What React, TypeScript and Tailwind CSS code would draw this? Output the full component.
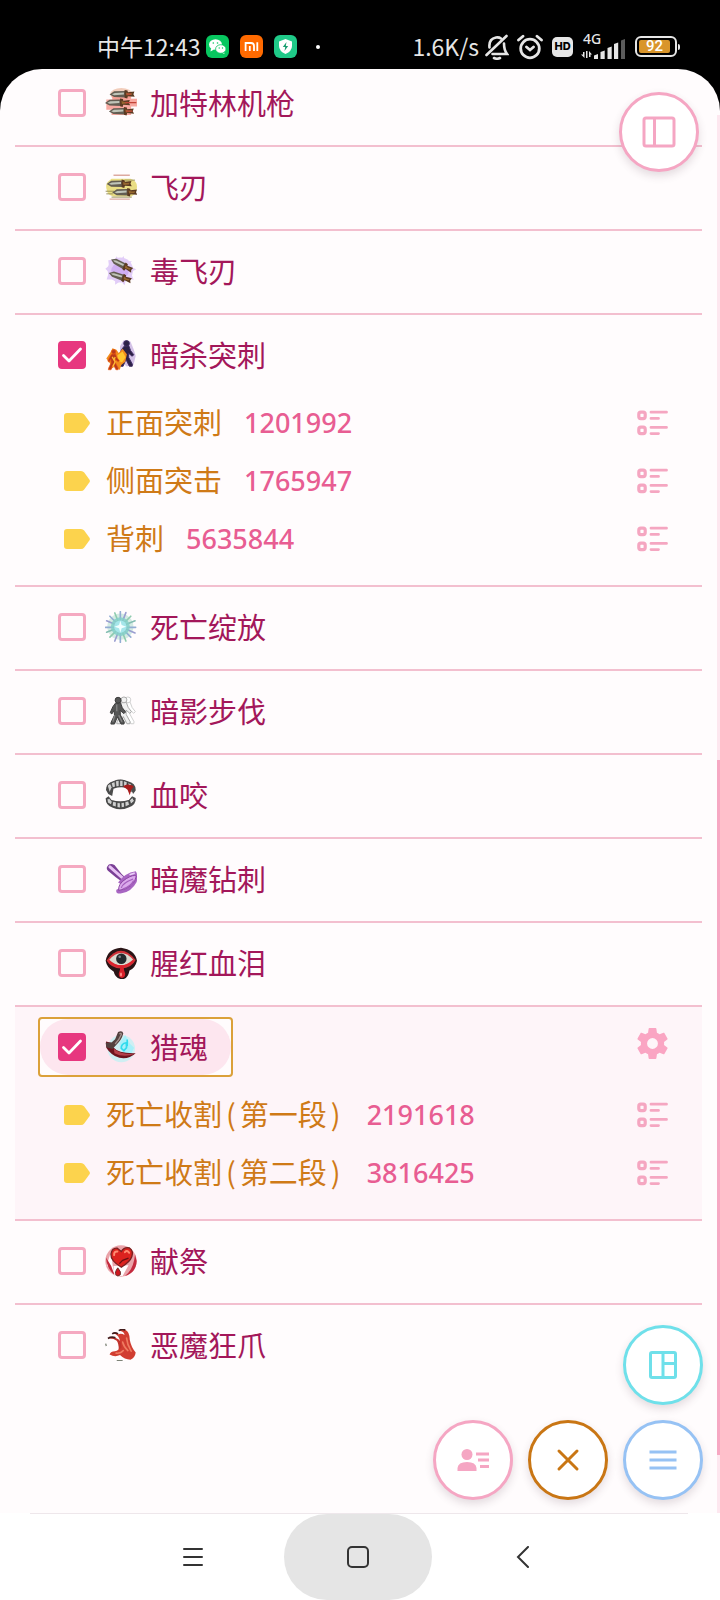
import { useState } from 'react';
import type { ReactNode } from 'react';

interface Hit {
  name: string;
  value: string;
}

interface Skill {
  id: string;
  name: string;
  checked?: boolean;
  hits?: Hit[];
}

const skills: Skill[] = [
  { id: 'gatling', name: '加特林机枪' },
  { id: 'blade', name: '飞刃' },
  { id: 'poison', name: '毒飞刃' },
  {
    id: 'assassin',
    name: '暗杀突刺',
    checked: true,
    hits: [
      { name: '正面突刺', value: '1201992' },
      { name: '侧面突击', value: '1765947' },
      { name: '背刺', value: '5635844' },
    ],
  },
  { id: 'bloom', name: '死亡绽放' },
  { id: 'step', name: '暗影步伐' },
  { id: 'bite', name: '血咬' },
  { id: 'drill', name: '暗魔钻刺' },
  { id: 'tears', name: '腥红血泪' },
  {
    id: 'soul',
    name: '猎魂',
    checked: true,
    hits: [
      { name: '死亡收割(第一段)', value: '2191618' },
      { name: '死亡收割(第二段)', value: '3816425' },
    ],
  },
  { id: 'sacrifice', name: '献祭' },
  { id: 'claw', name: '恶魔狂爪' },
];

// Blade points left, tip at 0,0
function Dagger({ at }: { at: string }) {
  return (
    <g transform={at}>
      <path d="M0 1 L14 -9 L48 -10 V10 L14 9 Z" fill="#635d52" />
      <path d="M7 0 L16 -4 L44 -5 V1 L14 3 Z" fill="#bfc4b8" />
      <path d="M46 -13 L55 -11 L56 -6 L76 -8 L73 0 L77 8 L56 6 L54 13 L46 11 Z" fill="#5b3a22" />
      <path d="M50 -5 L60 -2 L70 -3 L68 2 L52 4 Z" fill="#96672f" />
    </g>
  );
}

function Walker({ at, fill, stroke }: { at: string; fill: string; stroke: string }) {
  return (
    <g transform={at} fill={fill} stroke={stroke} strokeWidth="3" strokeLinejoin="round">
      <path d="M17 20 L32 18 L38 34 L48 47 L43 52 L31 42 L32 56 L44 78 L43 84 L34 84 L23 62 L14 84 L3 84 L4 78 L14 57 L13 42 L6 53 L1 49 L9 31 Z" />
      <circle cx="25" cy="11" r="9" />
    </g>
  );
}

const skillArt: Record<string, ReactNode> = {
  gatling: (
    <>
      <ellipse cx="50" cy="22" rx="34" ry="19" fill="#f2cdbb" />
      <path d="M22 18 H80 V36 H98 V60 H80 V86 H20 V70 H4 V38 H22 Z" fill="#f59389" opacity=".8" />
      <Dagger at="translate(14 22)" />
      <Dagger at="translate(0 48)" />
      <Dagger at="translate(12 74)" />
      <path d="M62 48 H96 M66 22 H80 M64 74 H84" stroke="#c24438" strokeWidth="4" />
    </>
  ),
  blade: (
    <>
      <path d="M20 24 H78 Q98 30 98 48 Q98 70 80 78 H26 Q8 74 6 60 Q0 44 8 34 Z" fill="#e9dd84" />
      <path d="M26 13 H76 M14 86 H76" stroke="#dda9a0" strokeWidth="4" />
      <path d="M2 62 H28 M4 70 H24 M60 28 H92 M20 80 H82" stroke="#9b925a" strokeWidth="3" />
      <Dagger at="translate(5 39)" />
      <Dagger at="translate(22 65)" />
    </>
  ),
  poison: (
    <>
      <g fill="#e2cdf8">
        <ellipse cx="47" cy="46" rx="39" ry="38" />
        <path d="M36 4 L43 18 L58 3 V22 L82 18 L72 34 L96 44 L78 53 L88 76 L65 72 L60 93 L48 80 L31 91 L31 75 L5 75 L12 53 L1 42 L12 33 L10 16 L30 14 Z" />
      </g>
      <ellipse cx="46" cy="48" rx="27" ry="24" fill="#cfaef2" />
      <Dagger at="translate(19 13) rotate(28) scale(.95)" />
      <Dagger at="translate(12 54) rotate(20) scale(.95)" />
    </>
  ),
  assassin: (
    <>
      <path d="M46 22 L57 4 L78 8 L88 32 L94 52 L87 80 L66 84 L46 62 Z" fill="#b79bd8" opacity=".6" />
      <Walker at="translate(42 3) scale(.96)" fill="#2c2145" stroke="#3e2b63" />
      <path d="M4 60 L16 42 L23 28 L35 33 L42 43 L54 30 L67 47 L62 70 L50 80 L45 95 L34 82 L18 92 L16 76 Z" fill="#f28c1c" />
      <path d="M38 50 L54 38 L63 56 L52 72 L40 66 Z" fill="#ffc72e" />
      <Walker at="translate(8 31) scale(.75)" fill="#b8391a" stroke="#e95b14" />
      <path d="M22 55 L31 70 L24 85 M31 55 L28 64" stroke="#ffbd35" strokeWidth="4" fill="none" />
    </>
  ),
  bloom: (
    <>
      <circle cx="47" cy="48" r="40" fill="#d3ebe3" />
      <g strokeWidth="5" strokeLinecap="round">
        <path d="M47 2 V96 M2 50 H94 M15 16 L79 80" stroke="#93add3" />
        <path d="M15 80 L79 16 M30 6 L64 92" stroke="#8ecbae" />
        <path d="M64 5 L30 92 M5 30 L92 67" stroke="#9a9dd0" />
        <path d="M5 65 L92 30" stroke="#84bdb2" />
      </g>
      <circle cx="47" cy="48" r="29" fill="#84cfc8" opacity=".85" />
      <circle cx="47" cy="48" r="19" fill="#a5e6ea" />
      <path d="M47 30 L51 43 L65 48 L51 53 L47 66 L43 53 L29 48 L43 43 Z" fill="#f2ffff" />
    </>
  ),
  step: (
    <>
      <Walker at="translate(45 4)" fill="#fff" stroke="#cfcfcf" />
      <Walker at="translate(33 4)" fill="#f1f1f1" stroke="#a9a9a9" />
      <Walker at="translate(15 5)" fill="#565656" stroke="#3b3b3b" />
      <path d="M30 62 L24 82 M42 62 L52 82 M36 29 V50" stroke="#858585" strokeWidth="4" />
    </>
  ),
  bite: (
    <>
      <path d="M3 34 Q3 12 27 6 Q48 -3 70 7 Q95 13 94 35 L86 46 Q82 31 70 28 Q46 22 26 30 L22 52 L10 46 Z" fill="#4c4c4c" />
      <path d="M2 59 L11 53 L20 64 Q46 72 73 64 L83 53 L94 58 Q96 80 72 87 Q48 98 24 88 Q2 82 2 59 Z" fill="#4c4c4c" />
      <g fill="#cfcfcf" stroke="#333" strokeWidth="2">
        <path d="M7 20 L16 14 L22 25 L14 42 Z" />
        <path d="M19 12 L30 8 L32 24 L23 27 Z" />
        <path d="M32 6 L43 4 V23 L34 24 Z" />
        <path d="M45 4 H55 V23 H45 Z" />
        <path d="M57 5 L68 9 L66 25 L57 24 Z" />
        <path d="M70 11 L81 16 L80 40 L73 29 Z" />
        <path d="M6 61 L14 60 L22 70 L19 79 L8 73 Z" />
        <path d="M24 68 L35 71 L34 86 L22 82 Z" />
        <path d="M37 72 L47 73 V89 L37 87 Z" />
        <path d="M49 73 L59 71 L60 86 L50 88 Z" />
        <path d="M61 70 L72 67 L75 80 L62 85 Z" />
        <path d="M75 65 L84 57 L90 67 L79 77 Z" />
      </g>
      <path d="M55 22 Q70 12 88 22 L80 34 L76 50 L69 33 Z" fill="#a91c1c" />
    </>
  ),
  drill: (
    <>
      <path d="M7 11 Q13 -1 29 6 L51 34 L64 46 L51 57 L33 44 L9 24 Q3 17 7 11 Z" fill="#7b3f96" />
      <path d="M15 12 L56 48" stroke="#e8c2f4" strokeWidth="9" strokeLinecap="round" />
      <path d="M40 60 Q60 30 94 25 Q102 35 97 58 Q82 87 51 93 Q31 96 35 82 Q50 76 49 65 Z" fill="#a865c2" />
      <path d="M42 84 Q39 64 65 48 Q88 34 96 40 Q90 77 42 84 Z" fill="#dba9ec" stroke="#8a45a2" strokeWidth="3" />
      <path d="M50 76 Q54 61 86 49 M54 80 Q79 72 88 54" stroke="#a55fbe" strokeWidth="4" fill="none" />
      <path d="M75 36 L91 31" stroke="#ead0f7" strokeWidth="5" fill="none" />
    </>
  ),
  tears: (
    <>
      <path d="M2 42 Q8 5 49 2 Q92 8 98 42 Q93 64 75 72 Q70 99 51 99 Q30 95 27 76 Q5 62 2 42 Z" fill="#2a1416" />
      <path d="M5 41 Q47 -17 94 40 Q82 64 50 66 Q18 64 5 41 Z" fill="#cf3037" />
      <path d="M13 39 Q48 -2 86 38 Q49 74 13 39 Z" fill="#d9d9cf" />
      <circle cx="50" cy="36" r="16" fill="#23292d" />
      <circle cx="45" cy="30" r="4" fill="#7b858a" />
      <path d="M12 44 Q48 74 87 43" fill="none" stroke="#e0202b" strokeWidth="5" />
      <path d="M47 60 H57 Q57 70 62 82 Q62 94 52 95 Q42 94 42 82 Q47 70 47 60 Z" fill="#d9202a" />
      <ellipse cx="49" cy="84" rx="3" ry="6" fill="#ff8f8b" />
    </>
  ),
  soul: (
    <>
      <circle cx="50" cy="54" r="42" fill="#cfeff3" />
      <path d="M44 37 L62 13 L69 26 L77 40 L89 51 L78 75 L59 70 L46 54 Z" fill="#a8f0fa" />
      <path d="M50 53 Q49 39 65 36 L66 51 L58 60 Z M68 26 V47" stroke="#31dbed" strokeWidth="5" fill="none" />
      <path d="M3 32 L28 38 L25 50 Q42 70 94 68 Q72 88 44 82 Q19 75 4 51 Z" fill="#6e141e" />
      <path d="M27 54 Q50 73 92 70 Q57 83 29 68 Z" fill="#b5404a" />
      <path d="M2 36 L20 35 L31 25 L40 3 Q54 -3 56 8 Q51 28 35 42 L23 55 L4 50 Z" fill="#54413f" />
      <path d="M44 9 Q50 5 50 11 Q45 25 31 40" stroke="#a4908d" strokeWidth="4" fill="none" />
    </>
  ),
  sacrifice: (
    <>
      <circle cx="49" cy="49" r="48" fill="#eaa3a9" />
      <path d="M5 62 L18 22 L35 8 Q12 40 30 88 Z" fill="#fff" />
      <path d="M61 95 Q87 76 92 30 L97 49 Q96 84 61 95 Z M3 38 Q6 73 29 91 L19 64 Z" fill="#c42a3e" />
      <path d="M26 64 L72 62 L54 95 L29 93 Z" fill="#fff" />
      <path d="M50 68 Q17 49 18 28 Q22 8 38 10 L50 20 Q59 5 75 9 Q88 18 82 36 Q77 51 50 68 Z" fill="#dc231f" stroke="#7a2020" strokeWidth="4" />
      <path d="M28 31 Q27 19 38 20 M61 22 Q68 14 74 24" stroke="#ff8c71" strokeWidth="6" fill="none" strokeLinecap="round" />
      <path d="M44 57 L54 47 L72 40" stroke="#681111" strokeWidth="4" fill="none" />
      <path d="M39 70 Q29 84 33 91 Q39 99 47 91 Q51 83 39 70 Z" fill="#cf171f" stroke="#673431" strokeWidth="3" />
    </>
  ),
  claw: (
    <>
      <path d="M40 16 Q30 8 24 14 Q34 14 40 22 Q48 32 44 50 Q46 66 30 68 Q18 68 14 78 Q30 88 46 80 Q60 94 78 94 Q92 88 94 72 Q80 56 76 34 Q76 8 62 2 Q48 -2 44 5 Q58 6 60 18 Q50 12 40 16 Z" fill="#d13d31" />
      <path d="M12 29 Q28 22 42 32 Q52 42 50 58 L42 62 Q42 44 36 36 Q26 28 12 29 Z" fill="#c2332c" />
      <path d="M54 40 Q58 56 70 66 M66 28 Q68 48 80 68 M34 74 Q48 76 56 66" stroke="#ef7b61" strokeWidth="5" fill="none" strokeLinecap="round" />
      <path d="M9 29 Q20 22 32 27 M22 15 Q30 9 40 15 M42 5 Q52 -1 62 3" stroke="#431c1c" strokeWidth="5" fill="none" />
      <path d="M36 97 H54 M2 45 L4 52" stroke="#7d8377" strokeWidth="4" />
    </>
  ),
};

function SkillIcon({ id }: { id: string }) {
  return (
    <svg viewBox="0 0 98 98" className="size-8 shrink-0" aria-hidden="true">
      {skillArt[id]}
    </svg>
  );
}

function ListIcon() {
  return (
    <svg viewBox="0 0 31 26" className="h-[26px] w-[31px]" fill="none" stroke="#f5a6c1" strokeWidth="3.2" aria-hidden="true">
      <rect x="1.8" y="2.2" width="6.4" height="6.4" rx="2" />
      <rect x="1.8" y="17.2" width="6.4" height="6.4" rx="2" />
      <path d="M14 2.2 H29.5 M14 8.4 H21.5 M14 17.4 H29.5 M14 23.6 H21.5" strokeWidth="2.8" strokeLinecap="round" />
    </svg>
  );
}

function HitRow({ hit }: { hit: Hit }) {
  const parts = hit.name.split(/([()])/);
  return (
    <div className="flex h-[58px] items-center pr-[34px] pl-[49px]">
      <svg viewBox="0 0 26 20" className="h-5 w-[26px] shrink-0" fill="#fcd34d" aria-hidden="true">
        <path d="M3 0 H17 Q19 0 20.2 1.6 L25.5 8.7 Q26.3 10 25.5 11.3 L20.2 18.4 Q19 20 17 20 H3 Q0 20 0 17 V3 Q0 0 3 0 Z" />
      </svg>
      <span className="ml-4 pb-1 text-[29px] leading-none text-[#cf7a17]">
        {parts.map((part, i) =>
          part === '(' || part === ')' ? (
            <span key={i} className="px-1">{part}</span>
          ) : (
            part
          ),
        )}
      </span>
      <span className="ml-[22px] pb-0.5 font-['Noto_Sans'] text-[27px] leading-none font-medium text-[#e85d92]">{hit.value}</span>
      <button type="button" aria-label={`${hit.name} 详情`} className="ml-auto">
        <ListIcon />
      </button>
    </div>
  );
}

function SkillRow({ skill, active, last }: { skill: Skill; active: boolean; last: boolean }) {
  const [checked, setChecked] = useState(!!skill.checked);

  return (
    <li className={`pt-2.5 ${last ? '' : 'border-b-2 border-[#f3bfcf]'} ${active ? 'bg-[#fef5f9]' : ''}`}>
      <div className={`flex items-center justify-between pr-[34px] pl-[23px] ${skill.hits ? 'pb-[9px]' : 'pb-3'}`}>
        <div className={`rounded-sm border-2 ${active ? 'border-[#dba13a] bg-[#fffcfd]' : 'border-transparent'}`}>
          <label className={`flex h-14 items-center rounded-full pr-[23px] pl-[18px] ${active ? 'bg-[#fde6ef]' : ''}`}>
            <span className="grid size-7 shrink-0">
              <input
                type="checkbox"
                checked={checked}
                onChange={(e) => setChecked(e.target.checked)}
                className="col-start-1 row-start-1 size-7 appearance-none rounded-sm border-3 border-[#f5a9c1] checked:border-[#e7377f] checked:bg-[#e7377f]"
              />
              {checked && (
                <svg viewBox="0 0 28 28" className="pointer-events-none col-start-1 row-start-1 size-7" fill="none" stroke="#fff" strokeWidth="2.8" strokeLinecap="round" strokeLinejoin="round">
                  <path d="M5.500 14.500 L11 20 L22.500 8" />
                </svg>
              )}
            </span>
            <span className="ml-[19px]">
              <SkillIcon id={skill.id} />
            </span>
            <span className="ml-[13px] pb-0.5 text-[29px] leading-none text-[#a3175a]">{skill.name}</span>
          </label>
        </div>
        {active && (
          <button type="button" aria-label="设置" className="flex h-[52px] items-center self-start">
            <svg viewBox="2 2 20 20" className="size-[31px]" fill="#faa5c3" aria-hidden="true">
              <path d="M12 15.5A3.5 3.5 0 0 1 8.5 12 3.5 3.5 0 0 1 12 8.5 3.5 3.5 0 0 1 15.5 12 3.5 3.5 0 0 1 12 15.5M19.43 12.97C19.47 12.65 19.5 12.33 19.5 12S19.47 11.34 19.43 11L21.54 9.37C21.73 9.22 21.78 8.95 21.66 8.73L19.66 5.27C19.54 5.05 19.27 4.96 19.05 5.05L16.56 6.05C16.04 5.66 15.5 5.32 14.87 5.07L14.5 2.42C14.46 2.18 14.25 2 14 2H10C9.75 2 9.54 2.18 9.5 2.42L9.13 5.07C8.5 5.32 7.96 5.66 7.44 6.05L4.95 5.05C4.73 4.96 4.46 5.05 4.34 5.27L2.34 8.73C2.21 8.95 2.27 9.22 2.46 9.37L4.57 11C4.53 11.34 4.5 11.67 4.5 12S4.53 12.65 4.57 12.97L2.46 14.63C2.27 14.78 2.21 15.05 2.34 15.27L4.34 18.73C4.46 18.95 4.73 19.03 4.95 18.95L7.44 17.94C7.96 18.34 8.5 18.68 9.13 18.93L9.5 21.58C9.54 21.82 9.75 22 10 22H14C14.25 22 14.46 21.82 14.5 21.58L14.87 18.93C15.5 18.67 16.04 18.34 16.56 17.94L19.05 18.95C19.27 19.03 19.54 18.95 19.66 18.73L21.66 15.27C21.78 15.05 21.73 14.78 21.54 14.63L19.43 12.97Z" />
            </svg>
          </button>
        )}
      </div>
      {skill.hits && (
        <div className="pb-[17px]">
          {skill.hits.map((hit) => (
            <HitRow key={hit.name} hit={hit} />
          ))}
        </div>
      )}
    </li>
  );
}

function RoundButton({ label, className, children }: { label: string; className: string; children: ReactNode }) {
  return (
    <button
      type="button"
      aria-label={label}
      className={`flex size-20 items-center justify-center rounded-full border-3 bg-white shadow-[0_4px_8px_rgba(80,50,70,0.16)] ${className}`}
    >
      <svg viewBox="0 0 34 34" className="size-[34px]" fill="none" stroke="currentColor" strokeWidth="3" strokeLinejoin="round" aria-hidden="true">
        {children}
      </svg>
    </button>
  );
}

function StatusBar() {
  return (
    <header className="flex h-[69px] items-center bg-black pt-6 pr-10 pl-[97px] text-[#e6e6e6]">
      <span className="text-[23px] leading-none">中午12:43</span>
      <div className="ml-1.5 flex items-center gap-[11px]">
        <svg viewBox="0 0 23 23" className="size-[23px]">
          <rect width="23" height="23" rx="6" fill="#07c75f" />
          <ellipse cx="9.5" cy="9.5" rx="6.5" ry="5.3" fill="#fff" />
          <path d="M5 13 L4.5 16.5 L8 14.5 Z M18 17 L18.5 19 L15.5 17.8 Z" fill="#fff" />
          <ellipse cx="14.8" cy="14" rx="5.2" ry="4.3" fill="#fff" stroke="#07c75f" strokeWidth=".8" />
          <circle cx="7.3" cy="8" r=".8" fill="#07c75f" />
          <circle cx="11.5" cy="8" r=".8" fill="#07c75f" />
          <circle cx="13.2" cy="13" r=".7" fill="#07c75f" />
          <circle cx="16.5" cy="13" r=".7" fill="#07c75f" />
        </svg>
        <svg viewBox="0 0 23 23" className="size-[23px]" fill="none" stroke="#fff" strokeWidth="1.8">
          <rect width="23" height="23" rx="6" fill="#ff6a00" stroke="none" />
          <path d="M5.6 16 V8 H11 Q14 8 14 11 V16 M9.8 11 V16 M17.3 7.2 V16" />
        </svg>
        <svg viewBox="0 0 23 23" className="size-[23px]">
          <rect width="23" height="23" rx="6" fill="#1fca88" />
          <path d="M11.5 4 L18 6.5 V11 Q18 16 11.5 19 Q5 16 5 11 V6.5 Z" fill="#fff" />
          <path d="M12.5 7 L8.8 12 H11.2 L10.5 16 L14.2 11 H11.8 Z" fill="#1a9f70" />
        </svg>
      </div>
      <span className="ml-[19px] size-1 rounded-full bg-white" />

      <span className="ml-auto text-[23px] leading-none">1.6K/s</span>
      <svg viewBox="0 0 24 26" className="ml-1.5 h-[26px] w-6" fill="none" stroke="#e6e6e6" strokeWidth="2.6" strokeLinecap="round">
        <path d="M1.5 21 L21.5 2" />
        <path d="M4.5 13.5 Q3.5 5 11 3.500 Q14 3 16 4.500 M19 9.500 Q19 16 22 20 H7.500" />
        <path d="M9 24 Q12 25.500 15 24" />
      </svg>
      <svg viewBox="0 0 26 26" className="ml-2 size-[26px]" fill="none" stroke="#e6e6e6" strokeWidth="2.8" strokeLinecap="round">
        <circle cx="13" cy="14.5" r="9.3" />
        <path d="M1.500 6 L6 2.200 M24.500 6 L20 2.200 M9.500 13 L13 16 L16.500 13" />
      </svg>
      <span className="ml-[9px] flex h-5 w-[21px] items-center justify-center rounded-[5px] bg-[#e6e6e6] font-['Inter'] text-[11px] font-extrabold text-black">
        HD
      </span>
      <div className="ml-2 flex h-6 w-11 flex-col">
        <span className="h-2 pl-0.5 font-['Noto_Sans'] text-[14px] leading-[8px] font-medium">4G</span>
        <svg viewBox="0 0 44 20" className="-mt-1 h-5 w-11 shrink-0" fill="#e6e6e6">
          <path d="M3.500 19 L0 15.500 H2 V13 H3.500 Z M5 19 V12 H6.500 V19 Z M8 12 L11 15.500 H9.500 V18 H8 Z" />
          <path d="M13 16.500 L17 15 V20 H13 Z M19.500 13 L23.700 11.500 V20 H19.500 Z M26.500 9 L30.700 7.500 V20 H26.500 Z M33 5 L37.200 3.500 V20 H33 Z" />
          <path d="M40 1.500 L44 0 V20 H40 Z" fill="#5c5c5c" />
        </svg>
      </div>
      <span className="ml-2.5 flex h-[21px] w-[42px] rounded-md border-2 border-[#e6e6e6] p-0.5">
        <span className="flex w-[31px] items-center justify-center rounded-xs bg-[#d9952a] font-['Roboto'] text-[15px] leading-none font-medium text-white">
          92
        </span>
      </span>
      <span className="ml-px h-1.5 w-0.5 rounded-r-xs bg-[#e6e6e6]" />
    </header>
  );
}

function NavBar() {
  return (
    <nav className="bg-white">
      <div className="mr-8 ml-[30px] border-t border-[#eee7eb]" />
      <div className="grid h-[86px] grid-cols-3 pr-[114px] pl-[110px]">
        <button type="button" aria-label="最近任务" className="flex items-center justify-center">
          <svg viewBox="0 0 20 20" className="size-5" stroke="#333" strokeWidth="2" strokeLinecap="round">
            <path d="M1 2 H19 M1 10 H19 M1 18 H19" />
          </svg>
        </button>
        <button type="button" aria-label="主屏幕" className="mx-auto flex w-[148px] items-center justify-center rounded-full bg-[#e5e5e5]">
          <svg viewBox="0 0 22 22" className="size-[22px]" fill="none" stroke="#333" strokeWidth="2">
            <rect x="1" y="1" width="20" height="20" rx="4" />
          </svg>
        </button>
        <button type="button" aria-label="返回" className="flex items-center justify-center">
          <svg viewBox="0 0 14 22" className="h-[22px] w-3.5" fill="none" stroke="#333" strokeWidth="2" strokeLinecap="round">
            <path d="M12 1 L2 11 L12 21" />
          </svg>
        </button>
      </div>
    </nav>
  );
}

export default function App() {
  return (
    <div className="flex min-h-screen flex-col bg-black font-['Noto_Sans_CJK_SC',sans-serif]">
      <StatusBar />
      <main className="relative flex-1 overflow-hidden rounded-t-[42px] bg-[#fffcfd] pb-[125px]">
        <ul className="-mt-1.5 mr-[18px] ml-[15px]">
          {skills.map((skill, i) => (
            <SkillRow key={skill.id} skill={skill} active={skill.id === 'soul'} last={i === skills.length - 1} />
          ))}
        </ul>

        {/* scroll track */}
        <div className="absolute top-[46px] right-0 bottom-0 w-[3px] bg-[#fde7ef]">
          <div className="mt-[645px] h-[695px] bg-[#f7a8c3]" />
        </div>

        <div className="absolute top-[23px] right-[21px]">
          <RoundButton label="侧栏" className="border-[#f5a6c3] text-[#f5a6c3]">
            <rect x="2" y="3" width="30" height="28" rx="2" />
            <path d="M12.500 3 V31" />
          </RoundButton>
        </div>

        <div className="absolute right-[17px] bottom-[13px] flex flex-col items-end gap-[15px]">
          <RoundButton label="布局" className="border-[#6fe0ea] text-[#6fe0ea]">
            <rect x="4.500" y="4.500" width="25" height="25" rx="1.500" />
            <path d="M17 5 V29 M17 15.500 H29" />
          </RoundButton>
          <div className="flex gap-[15px]">
            <RoundButton label="角色" className="border-[#f5a6c3] text-[#f5a6c3]">
              <circle cx="11" cy="11.500" r="5.500" fill="currentColor" stroke="none" />
              <path d="M1.500 28 V25 Q2 19 11 19 Q20 19 20.500 25 V28 Z" fill="currentColor" stroke="none" />
              <path d="M20 11 H33 M22 17 H33 M24 23.500 H33" />
            </RoundButton>
            <RoundButton label="关闭" className="border-[#c97614] text-[#c97614]">
              <path d="M8 8 L26 26 M26 8 L8 26" strokeLinecap="round" />
            </RoundButton>
            <RoundButton label="菜单" className="border-[#96c2f4] text-[#96c2f4]">
              <path d="M3.500 9 H30.500 M3.500 17 H30.500 M3.500 25 H30.500" />
            </RoundButton>
          </div>
        </div>
      </main>
      <NavBar />
    </div>
  );
}
